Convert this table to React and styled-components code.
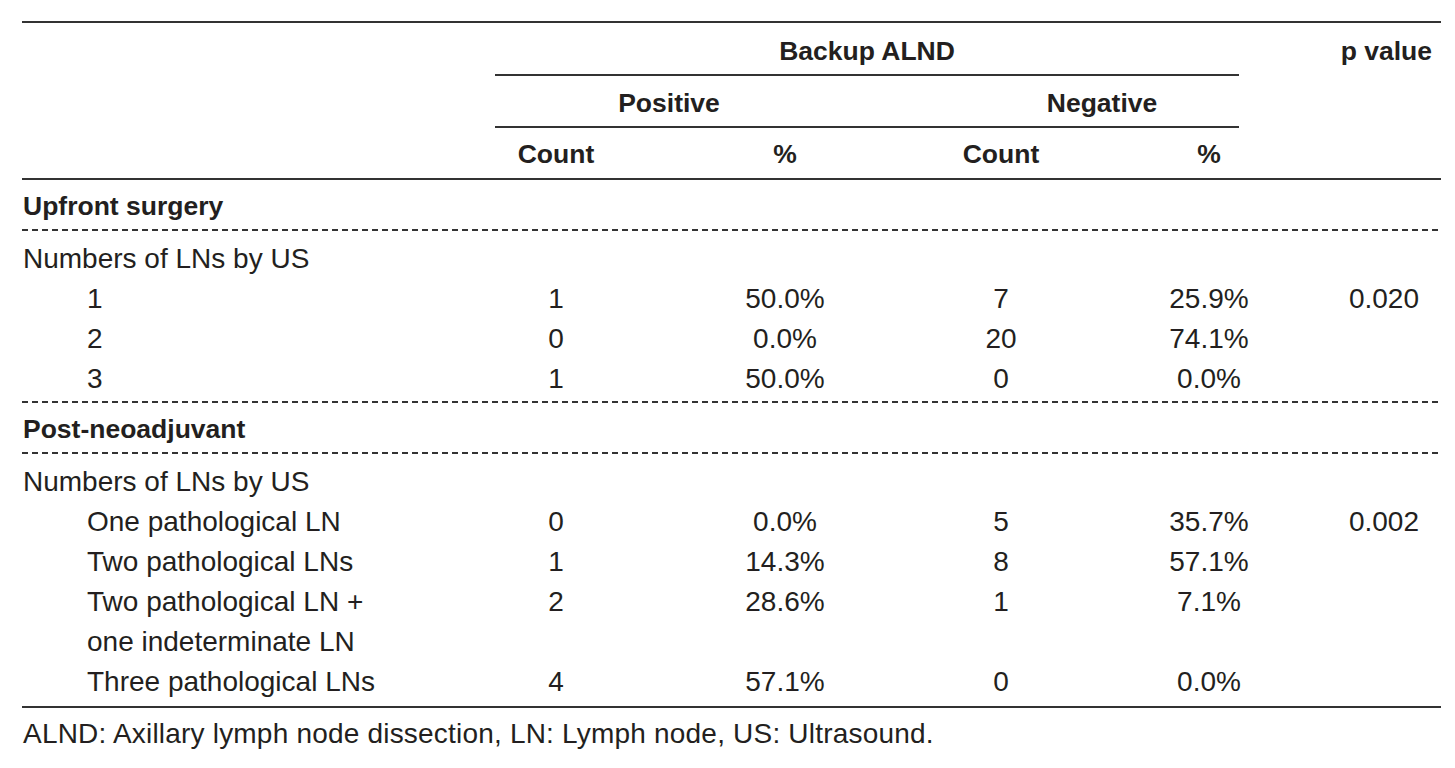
import React from 'react';
import styled, { createGlobalStyle } from 'styled-components';

const GlobalStyle = createGlobalStyle`
  html, body {
    margin: 0;
    padding: 0;
    background: #ffffff;
  }

  body {
    font-family: 'Liberation Sans', Arial, sans-serif;
    color: #231f20;
  }
`;

const INK = '#231f20';
const RULE = '#333333';

// label | count+ | %+ | count- | (gap) | %- | p
const COLS = '473px 122px 336px 96px 80px 160px 1fr';
const VALUE_COLS = [2, 3, 4, 6];

const Page = styled.div`
  width: 1455px;
  height: 768px;
  overflow: hidden;
`;

const Table = styled.div`
  width: 1419px;
  margin: 21px 0 0 22px;
  border-top: 2px solid ${RULE};
`;

const HeadGroup = styled.div`
  display: grid;
  grid-template-columns: 473px 744px 1fr;
`;

const SpanStack = styled.div`
  display: flex;
  flex-direction: column;
`;

const HeadText = styled.div`
  font-size: 26.5px;
  font-weight: bold;
  line-height: 46px;
  color: ${INK};
`;

const SpanHead = styled(HeadText)`
  height: 53px;
  box-sizing: border-box;
  padding-top: 5px;
  text-align: center;
  border-bottom: 2px solid ${RULE};
`;

const SubSpan = styled.div`
  display: grid;
  grid-template-columns: 348px 1fr 274px;
  height: 52px;
  box-sizing: border-box;
  padding-top: 4px;
  border-bottom: 2px solid ${RULE};
`;

const SubHead = styled(HeadText)`
  grid-column: ${(p) => p.$col};
  text-align: center;
`;

const PHead = styled(HeadText)`
  padding-top: 5px;
  padding-right: 9px;
  text-align: right;
`;

const Row = styled.div`
  display: grid;
  grid-template-columns: ${COLS};
  align-items: start;
  font-size: 28px;
  line-height: 40px;
  color: ${INK};
`;

const ColHeadRow = styled(Row)`
  height: 52px;
  box-sizing: border-box;
  padding-top: 3px;
  border-bottom: 2px solid ${RULE};
`;

const ColHead = styled(HeadText)`
  grid-column: ${(p) => p.$col};
  text-align: center;
`;

const SectionTitle = styled.div`
  height: 49px;
  box-sizing: border-box;
  padding: 3px 0 0 1px;
  font-size: 26.5px;
  font-weight: bold;
  line-height: 46px;
  color: ${INK};
`;

const Rule = styled.div`
  height: 2px;
  background: ${(p) =>
    p.$dashed
      ? `repeating-linear-gradient(90deg, ${RULE} 0 6px, transparent 6px 10px)`
      : RULE};
`;

const Body = styled.div`
  padding: 8px 0 ${(p) => p.$bottom}px;
`;

const Label = styled.div`
  grid-column: 1;
  padding-left: ${(p) => (p.$indent ? 65 : 1)}px;
  white-space: nowrap;
`;

const Num = styled.div`
  grid-column: ${(p) => p.$col};
  text-align: center;
`;

const PVal = styled.div`
  grid-column: 7;
  text-align: right;
  padding-right: 22px;
`;

const Note = styled.div`
  padding: 6px 0 0 1px;
  font-size: 28px;
  line-height: 40px;
  letter-spacing: 0.2px;
  color: ${INK};
`;

const sections = [
  {
    title: 'Upfront surgery',
    closing: 'dashed',
    bottom: 2,
    rows: [
      { label: 'Numbers of LNs by US' },
      { label: '1', indent: true, values: ['1', '50.0%', '7', '25.9%'], p: '0.020' },
      { label: '2', indent: true, values: ['0', '0.0%', '20', '74.1%'] },
      { label: '3', indent: true, values: ['1', '50.0%', '0', '0.0%'] },
    ],
  },
  {
    title: 'Post-neoadjuvant',
    closing: 'solid',
    bottom: 4,
    rows: [
      { label: 'Numbers of LNs by US' },
      { label: 'One pathological LN', indent: true, values: ['0', '0.0%', '5', '35.7%'], p: '0.002' },
      { label: 'Two pathological LNs', indent: true, values: ['1', '14.3%', '8', '57.1%'] },
      {
        label: ['Two pathological LN +', 'one indeterminate LN'],
        indent: true,
        values: ['2', '28.6%', '1', '7.1%'],
      },
      { label: 'Three pathological LNs', indent: true, values: ['4', '57.1%', '0', '0.0%'] },
    ],
  },
];

function DataRow({ row }) {
  const lines = Array.isArray(row.label) ? row.label : [row.label];
  return (
    <Row>
      <Label $indent={row.indent}>
        {lines.map((l, i) => (
          <div key={i}>{l}</div>
        ))}
      </Label>
      {row.values &&
        row.values.map((v, i) => (
          <Num key={i} $col={VALUE_COLS[i]}>
            {v}
          </Num>
        ))}
      {row.p && <PVal>{row.p}</PVal>}
    </Row>
  );
}

function App() {
  return (
    <Page>
      <GlobalStyle />
      <Table>
        <HeadGroup>
          <div />
          <SpanStack>
            <SpanHead>Backup ALND</SpanHead>
            <SubSpan>
              <SubHead $col={1}>Positive</SubHead>
              <SubHead $col={3}>Negative</SubHead>
            </SubSpan>
          </SpanStack>
          <PHead>p value</PHead>
        </HeadGroup>

        <ColHeadRow>
          <ColHead $col={2}>Count</ColHead>
          <ColHead $col={3}>%</ColHead>
          <ColHead $col={4}>Count</ColHead>
          <ColHead $col={6}>%</ColHead>
        </ColHeadRow>

        {sections.map((s) => (
          <React.Fragment key={s.title}>
            <SectionTitle>{s.title}</SectionTitle>
            <Rule $dashed />
            <Body $bottom={s.bottom}>
              {s.rows.map((r, i) => (
                <DataRow key={i} row={r} />
              ))}
            </Body>
            <Rule $dashed={s.closing === 'dashed'} />
          </React.Fragment>
        ))}

        <Note>ALND: Axillary lymph node dissection, LN: Lymph node, US: Ultrasound.</Note>
      </Table>
    </Page>
  );
}

export default App;
